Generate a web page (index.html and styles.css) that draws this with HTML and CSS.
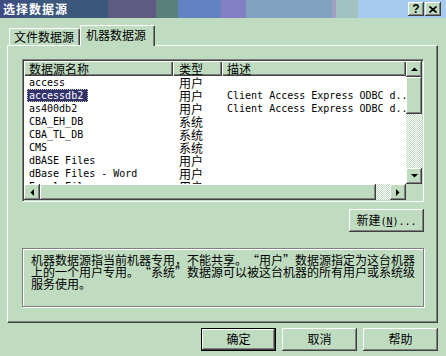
FILE: index.html
```html
<!DOCTYPE html>
<html lang="zh-CN">
<head>
    <meta charset="UTF-8">
    <title>选择数据源</title>
    <link rel="stylesheet" href="styles.css">
</head>
<body>
    <div class="titlebar">
        <span class="title">选择数据源</span>
        <div class="caption-buttons">
            <span class="cap-btn">?</span>
            <span class="cap-btn">
                <svg width="8" height="7" viewBox="0 0 8 7"><path d="M0.5 0.5 L7.5 6.5 M7.5 0.5 L0.5 6.5" stroke="#000" stroke-width="1.7"/></svg>
            </span>
        </div>
    </div>

    <div class="tabs">
        <div class="tab">文件数据源</div>
        <div class="tab active">机器数据源</div>
    </div>

    <div class="panel">
        <div class="listview">
            <div class="list-main">
                <div class="list-header">
                    <div class="head col-name">数据源名称</div>
                    <div class="head col-type">类型</div>
                    <div class="head col-desc">描述</div>
                </div>
                <div class="list-rows">
                    <div class="row"><div class="cell col-name mono">access</div><div class="cell col-type">用户</div><div class="cell col-desc mono"></div></div>
                    <div class="row"><div class="cell col-name mono"><span class="selected">accessdb2</span></div><div class="cell col-type">用户</div><div class="cell col-desc mono">Client Access Express ODBC d..</div></div>
                    <div class="row"><div class="cell col-name mono">as400db2</div><div class="cell col-type">用户</div><div class="cell col-desc mono">Client Access Express ODBC d..</div></div>
                    <div class="row"><div class="cell col-name mono">CBA_EH_DB</div><div class="cell col-type">系统</div><div class="cell col-desc mono"></div></div>
                    <div class="row"><div class="cell col-name mono">CBA_TL_DB</div><div class="cell col-type">系统</div><div class="cell col-desc mono"></div></div>
                    <div class="row"><div class="cell col-name mono">CMS</div><div class="cell col-type">系统</div><div class="cell col-desc mono"></div></div>
                    <div class="row"><div class="cell col-name mono">dBASE Files</div><div class="cell col-type">用户</div><div class="cell col-desc mono"></div></div>
                    <div class="row"><div class="cell col-name mono">dBase Files - Word</div><div class="cell col-type">用户</div><div class="cell col-desc mono"></div></div>
                    <div class="row"><div class="cell col-name mono">Excel Files</div><div class="cell col-type">用户</div><div class="cell col-desc mono"></div></div>
                </div>
            </div>

            <div class="vscroll">
                <div class="sb-btn">
                    <svg width="7" height="4" viewBox="0 0 7 4"><polygon points="0,4 7,4 3.5,0.5" fill="#000"/></svg>
                </div>
                <div class="sb-thumb"></div>
                <div class="sb-track"></div>
                <div class="sb-btn">
                    <svg width="7" height="4" viewBox="0 0 7 4"><polygon points="0,0 7,0 3.5,3.5" fill="#000"/></svg>
                </div>
            </div>

            <div class="hscroll">
                <div class="sb-btn">
                    <svg width="4" height="7" viewBox="0 0 4 7"><polygon points="4,0 4,7 0.5,3.5" fill="#000"/></svg>
                </div>
                <div class="sb-thumb h-thumb"></div>
                <div class="sb-track"></div>
                <div class="sb-btn">
                    <svg width="4" height="7" viewBox="0 0 4 7"><polygon points="0,0 0,7 3.5,3.5" fill="#000"/></svg>
                </div>
            </div>

            <div class="corner"></div>
        </div>

        <div class="new-row">
            <div class="btn">新建<span class="mono">(<u>N</u>)...</span></div>
        </div>

        <div class="info">
            机器数据源指当前机器专用，不能共享。<span class="q-open">“</span>用户<span class="q-close">”</span>数据源指定为这台机器<br>
            上的一个用户专用。<span class="q-open">“</span>系统<span class="q-close">”</span>数据源可以被这台机器的所有用户或系统级<br>
            服务使用。
        </div>
    </div>

    <div class="footer">
        <div class="btn default">确定</div>
        <div class="btn">取消</div>
        <div class="btn">帮助</div>
    </div>
</body>
</html>
```

FILE: styles.css
```css
body {
    margin: 0;
    width: 446px;
    height: 356px;
    overflow: hidden;
    background: #c0dcc0;
    font-family: "Noto Sans CJK SC", sans-serif;
    font-size: 12px;
    color: #000;
}

.mono {
    font-family: "DejaVu Sans Mono", monospace;
    font-size: 10px;
}

/* title bar */

.titlebar {
    display: flex;
    align-items: center;
    height: 18px;
    padding-left: 3px;
    background: linear-gradient(to right,
        #3f4a84 0, #3b587c 40px, #3b587c 108px,
        #5e5b82 108px, #5e5b82 156px,
        #5a8079 156px, #5a8079 178px,
        #6282c2 178px, #6282c2 221px,
        #8280c2 221px, #8280c2 246px,
        #82a2c2 246px, #82a2c2 332px,
        #a0a0c4 332px, #a0a0c4 336px,
        #a2c2c2 336px, #a2c2c2 358px,
        #a6caf0 358px);
}

.title {
    color: #fff;
    font-weight: bold;
    letter-spacing: 1px;
    line-height: 18px;
}

.caption-buttons {
    display: flex;
    gap: 1px;
    margin-left: auto;
    padding-right: 5px;
}

.cap-btn {
    display: flex;
    align-items: center;
    justify-content: center;
    width: 16px;
    height: 14px;
    background: #c0dcc0;
    box-shadow: inset -1px -1px #404040, inset 1px 1px #fff, inset -2px -2px #808080;
    font-family: "Liberation Sans", sans-serif;
    font-weight: bold;
    font-size: 12px;
    line-height: 14px;
}

/* tabs */

.tabs {
    display: flex;
    align-items: flex-end;
    height: 27px;
    padding-left: 9px;
}

.tab {
    box-sizing: border-box;
    width: 71px;
    height: 17px;
    padding-left: 4px;
    border-top: 1px solid #fff;
    border-left: 1px solid #fff;
    border-right: 1px solid #404040;
    border-radius: 2px 2px 0 0;
    box-shadow: inset -1px 0 #808080;
    line-height: 16px;
    white-space: nowrap;
}

.tab.active {
    width: 75px;
    height: 21px;
    margin-bottom: -1px;
    padding: 1px 0 0 5px;
    position: relative;
    z-index: 1;
    background: #c0dcc0;
}

.panel {
    box-sizing: border-box;
    width: 431px;
    height: 278px;
    margin-left: 7px;
    padding: 13px 0 0 14px;
    border-top: 1px solid #fff;
    border-left: 1px solid #fff;
    border-right: 1px solid #404040;
    border-bottom: 1px solid #404040;
    box-shadow: inset -1px -1px #808080;
}

/* list view */

.listview {
    box-sizing: border-box;
    display: grid;
    grid-template-columns: 1fr 16px;
    grid-template-rows: 1fr 16px;
    width: 402px;
    height: 143px;
    padding: 1px;
    border: 1px solid;
    border-color: #808080 #fff #fff #808080;
    box-shadow: inset 1px 1px #404040, inset -1px -1px #c0dcc0;
    background: #fff;
}

.list-main {
    grid-area: 1 / 1;
    overflow: hidden;
}

.list-header {
    display: flex;
    height: 15px;
}

.head {
    box-sizing: border-box;
    height: 15px;
    padding-left: 5px;
    background: #c0dcc0;
    box-shadow: inset 1px 1px #fff, inset -1px -1px #404040, inset -2px -2px #808080;
    line-height: 15px;
    white-space: nowrap;
}

.col-name {
    width: 149px;
    flex: none;
}

.col-type {
    width: 49px;
    flex: none;
}

.col-desc {
    flex: 1;
}

.head.col-type {
    padding-left: 6px;
}

.row {
    display: flex;
    height: 13px;
    line-height: 13px;
}

.cell {
    box-sizing: border-box;
    padding-left: 5px;
    white-space: nowrap;
}

.cell.col-type {
    padding-left: 6px;
    font-size: 12px;
}

.selected {
    display: inline-block;
    height: 13px;
    margin-left: -2px;
    padding: 0 5px 0 2px;
    background: #31316b;
    color: #fff;
    outline: 1px dotted #c8c8a0;
    outline-offset: -1px;
}

/* scroll bars */

.vscroll {
    grid-area: 1 / 2;
    display: flex;
    flex-direction: column;
}

.hscroll {
    grid-area: 2 / 1;
    display: flex;
}

.corner {
    grid-area: 2 / 2;
    background: #c0dcc0;
}

.sb-btn, .sb-thumb {
    display: flex;
    align-items: center;
    justify-content: center;
    flex: none;
    width: 16px;
    height: 16px;
    background: #c0dcc0;
    box-shadow: inset -1px -1px #404040, inset 1px 1px #fff, inset -2px -2px #808080;
}

.vscroll .sb-thumb {
    height: 37px;
}

.h-thumb {
    width: 336px;
}

.sb-track {
    flex: 1;
    background: repeating-conic-gradient(#c0dcc0 0 25%, #fff 0 50%) 0 0 / 2px 2px;
}

/* buttons */

.new-row {
    display: flex;
    justify-content: flex-end;
    width: 402px;
    margin-top: 7px;
}

.btn {
    box-sizing: border-box;
    width: 75px;
    height: 23px;
    background: #c0dcc0;
    box-shadow: inset -1px -1px #404040, inset 1px 1px #fff, inset -2px -2px #808080;
    text-align: center;
    line-height: 22px;
    white-space: nowrap;
}

.btn.default {
    border: 1px solid #000;
    line-height: 20px;
}

.info {
    box-sizing: border-box;
    width: 402px;
    height: 59px;
    margin-top: 16px;
    padding: 5px 0 0 8px;
    border: 1px solid #808080;
    box-shadow: inset 1px 1px #fff, 1px 1px #fff;
    line-height: 12px;
    white-space: nowrap;
}

.q-open, .q-close {
    display: inline-block;
    width: 12px;
}

.q-open {
    text-align: right;
}

.q-close {
    text-align: left;
}

.footer {
    display: flex;
    justify-content: flex-end;
    gap: 6px;
    margin-top: 5px;
    padding-right: 8px;
}
```
